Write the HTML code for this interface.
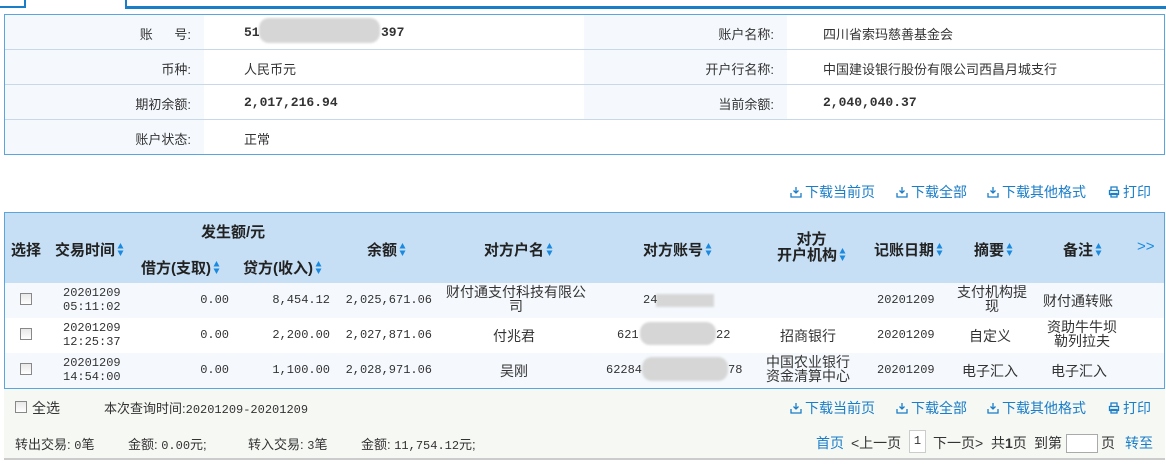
<!DOCTYPE html>
<html><head><meta charset="utf-8">
<style>
*{margin:0;padding:0;box-sizing:border-box}
body{width:1166px;height:464px;background:#fff;font-family:"Liberation Sans","Noto Sans CJK SC",sans-serif;font-size:13px;color:#333;position:relative;overflow:hidden}
.a{position:absolute;white-space:nowrap}
.mono{font-family:"Liberation Mono","Noto Sans CJK SC",monospace;font-size:12px}
.bm{font-family:"Liberation Mono",monospace;font-size:13px;font-weight:bold}
.blue{color:#1a7dc8}
.lnk{position:absolute;color:#1a7dc8;font-size:14px;white-space:nowrap}
.lnk svg{vertical-align:-1px;margin-right:3px}
.hd{position:absolute;font-weight:bold;font-size:15px;color:#222;white-space:nowrap;text-align:center}
.sort{display:inline-block;width:7px;height:15px;vertical-align:-2px;margin-left:2px}
.cb{position:absolute;width:12px;height:12px;border:1px solid #888;background:linear-gradient(#e8e8e8,#fff)}
.blur{position:absolute;background:#d6d6d6;border-radius:10px;filter:blur(1px)}
</style></head><body>
<div class="a" style="left:0;top:6px;width:26px;height:2px;background:#1a7dc8"></div>
<div class="a" style="left:24px;top:0;width:2px;height:8px;background:#1a7dc8"></div>
<div class="a" style="left:125px;top:0;width:2px;height:8px;background:#1a7dc8"></div>
<div class="a" style="left:125px;top:6px;width:1041px;height:3px;background:#1a7dc8"></div>

<div class="a" style="left:4px;top:14px;width:1161px;height:141px;border:1px solid #5aa5e0"></div>
<div class="a" style="left:5px;top:15px;width:199px;height:139px;background:#f5f9fd"></div>
<div class="a" style="left:584px;top:15px;width:203px;height:104px;background:#f5f9fd"></div>
<div class="a" style="left:5px;top:49px;width:1159px;height:1px;background:#c8d8e8"></div>
<div class="a" style="left:5px;top:84px;width:1159px;height:1px;background:#c8d8e8"></div>
<div class="a" style="left:5px;top:119px;width:1159px;height:1px;background:#c8d8e8"></div>

<div class="a" style="right:975px;top:24px">账&nbsp;&nbsp;&nbsp;&nbsp;&nbsp;&nbsp;号:</div>
<div class="a" style="right:975px;top:59px">币种:</div>
<div class="a" style="right:975px;top:94px">期初余额:</div>
<div class="a" style="right:975px;top:129px">账户状态:</div>
<div class="blur" style="left:259px;top:18px;width:121px;height:25px"></div>
<div class="a bm" style="left:244px;top:25px">51</div>
<div class="a bm" style="left:381px;top:25px">397</div>
<div class="a" style="left:244px;top:59px">人民币元</div>
<div class="a bm" style="left:244px;top:95px">2,017,216.94</div>
<div class="a" style="left:244px;top:129px">正常</div>

<div class="a" style="right:392px;top:24px">账户名称:</div>
<div class="a" style="right:392px;top:59px">开户行名称:</div>
<div class="a" style="right:392px;top:94px">当前余额:</div>
<div class="a" style="left:823px;top:24px">四川省索玛慈善基金会</div>
<div class="a" style="left:823px;top:59px">中国建设银行股份有限公司西昌月城支行</div>
<div class="a bm" style="left:823px;top:95px">2,040,040.37</div>

<svg width="0" height="0" style="position:absolute"><defs>
<symbol id="dl" viewBox="0 0 12 12"><path d="M6 1v6M3.5 4.5L6 7l2.5-2.5M1 7v4h10V7" fill="none" stroke="#1a7dc8" stroke-width="1.3"/></symbol>
<symbol id="pr" viewBox="0 0 12 12"><path d="M3 4V1h6v3M1.5 4.5h9v4h-9zM3 7.5h6V11H3z" fill="none" stroke="#1a7dc8" stroke-width="1.3"/></symbol>
<symbol id="s" viewBox="0 0 7 15"><path d="M3.5 1L6.5 6.5H0.5zM3.5 14L6.5 8.5H0.5z" fill="#1a8ae0"/></symbol>
</defs></svg>
<div class="lnk" style="left:790px;top:182px"><svg width="12" height="12"><use href="#dl"/></svg>下载当前页</div>
<div class="lnk" style="left:896px;top:182px"><svg width="12" height="12"><use href="#dl"/></svg>下载全部</div>
<div class="lnk" style="left:987px;top:182px"><svg width="12" height="12"><use href="#dl"/></svg>下载其他格式</div>
<div class="lnk" style="left:1108px;top:182px"><svg width="12" height="12"><use href="#pr"/></svg>打印</div>

<div class="a" style="left:4px;top:212px;width:1161px;height:177px;border:1px solid #5aa5e0;background:#fff"></div>
<div class="a" style="left:5px;top:213px;width:1159px;height:70px;background:#c6dff5"></div>
<div class="a" style="left:5px;top:283px;width:1159px;height:35px;background:#f5f9fd"></div>
<div class="a" style="left:5px;top:353px;width:1159px;height:35px;background:#f5f9fd"></div>

<div class="hd" style="left:11px;top:239px">选择</div>
<div class="hd" style="left:55px;top:239px">交易时间<svg class="sort"><use href="#s"/></svg></div>
<div class="hd" style="left:201px;top:221px">发生额/元</div>
<div class="hd" style="left:141px;top:257px">借方(支取)<svg class="sort"><use href="#s"/></svg></div>
<div class="hd" style="left:243px;top:257px">贷方(收入)<svg class="sort"><use href="#s"/></svg></div>
<div class="hd" style="left:367px;top:239px">余额<svg class="sort"><use href="#s"/></svg></div>
<div class="hd" style="left:484px;top:239px">对方户名<svg class="sort"><use href="#s"/></svg></div>
<div class="hd" style="left:643px;top:239px">对方账号<svg class="sort"><use href="#s"/></svg></div>
<div class="hd" style="left:777px;top:232px;line-height:15px">对方<br>开户机构<svg class="sort"><use href="#s"/></svg></div>
<div class="hd" style="left:874px;top:239px">记账日期<svg class="sort"><use href="#s"/></svg></div>
<div class="hd" style="left:974px;top:239px">摘要<svg class="sort"><use href="#s"/></svg></div>
<div class="hd" style="left:1063px;top:239px">备注<svg class="sort"><use href="#s"/></svg></div>
<div class="hd" style="left:1137px;top:238px;color:#1a8ae0;font-weight:normal">&gt;&gt;</div>

<div class="cb" style="left:20px;top:293px"></div>
<div class="cb" style="left:20px;top:328px"></div>
<div class="cb" style="left:20px;top:363px"></div>

<div class="a mono" style="left:63px;top:286px;line-height:14px">20201209<br>05:11:02</div>
<div class="a mono" style="left:63px;top:321px;line-height:14px">20201209<br>12:25:37</div>
<div class="a mono" style="left:63px;top:356px;line-height:14px">20201209<br>14:54:00</div>
<div class="a mono" style="right:937px;top:293px">0.00</div>
<div class="a mono" style="right:937px;top:328px">0.00</div>
<div class="a mono" style="right:937px;top:363px">0.00</div>
<div class="a mono" style="right:836px;top:293px">8,454.12</div>
<div class="a mono" style="right:836px;top:328px">2,200.00</div>
<div class="a mono" style="right:836px;top:363px">1,100.00</div>
<div class="a mono" style="right:734px;top:293px">2,025,671.06</div>
<div class="a mono" style="right:734px;top:328px">2,027,871.06</div>
<div class="a mono" style="right:734px;top:363px">2,028,971.06</div>
<div class="a" style="left:446px;top:285px;line-height:14px;text-align:center;font-size:14px">财付通支付科技有限公<br>司</div>
<div class="a" style="left:493px;top:326px;font-size:14px">付兆君</div>
<div class="a" style="left:500px;top:361px;font-size:14px">吴刚</div>

<div class="blur" style="left:656px;top:294px;width:58px;height:13px;border-radius:0"></div>
<div class="a mono" style="left:643px;top:293px">24</div>
<div class="blur" style="left:640px;top:322px;width:76px;height:23px"></div>
<div class="a mono" style="left:617px;top:328px">621</div>
<div class="a mono" style="left:716px;top:328px">22</div>
<div class="blur" style="left:642px;top:357px;width:86px;height:24px"></div>
<div class="a mono" style="left:606px;top:363px">62284</div>
<div class="a mono" style="left:728px;top:363px">78</div>

<div class="a" style="left:780px;top:326px;font-size:14px">招商银行</div>
<div class="a" style="left:766px;top:355px;line-height:14px;text-align:center;font-size:14px">中国农业银行<br>资金清算中心</div>
<div class="a mono" style="left:877px;top:293px">20201209</div>
<div class="a mono" style="left:877px;top:328px">20201209</div>
<div class="a mono" style="left:877px;top:363px">20201209</div>
<div class="a" style="left:957px;top:285px;line-height:14px;text-align:center;font-size:14px">支付机构提<br>现</div>
<div class="a" style="left:969px;top:326px;font-size:14px">自定义</div>
<div class="a" style="left:962px;top:361px;font-size:14px">电子汇入</div>
<div class="a" style="left:1043px;top:291px;font-size:14px">财付通转账</div>
<div class="a" style="left:1047px;top:320px;line-height:14px;text-align:center;font-size:14px">资助牛牛坝<br>勒列拉夫</div>
<div class="a" style="left:1051px;top:361px;font-size:14px">电子汇入</div>

<div class="a" style="left:4px;top:389px;width:1161px;height:71px;background:#f6f8f4;border-bottom:2px solid #ccc"></div>
<div class="cb" style="left:15px;top:401px"></div>
<div class="a" style="left:32px;top:398px;font-size:14px">全选</div>
<div class="a" style="left:104px;top:398px">本次查询时间:<span class="mono">20201209-20201209</span></div>
<div class="lnk" style="left:790px;top:398px"><svg width="12" height="12"><use href="#dl"/></svg>下载当前页</div>
<div class="lnk" style="left:896px;top:398px"><svg width="12" height="12"><use href="#dl"/></svg>下载全部</div>
<div class="lnk" style="left:987px;top:398px"><svg width="12" height="12"><use href="#dl"/></svg>下载其他格式</div>
<div class="lnk" style="left:1108px;top:398px"><svg width="12" height="12"><use href="#pr"/></svg>打印</div>

<div class="a" style="left:15px;top:434px">转出交易: <span class="mono">0</span>笔</div>
<div class="a" style="left:128px;top:434px">金额: <span class="mono">0.00</span>元;</div>
<div class="a" style="left:248px;top:434px">转入交易: <span class="mono">3</span>笔</div>
<div class="a" style="left:361px;top:434px">金额: <span class="mono">11,754.12</span>元;</div>

<div class="a blue" style="left:816px;top:433px;font-size:14px">首页</div>
<div class="a" style="left:851px;top:433px;font-size:14px">&lt;上一页</div>
<div class="a mono" style="left:909px;top:430px;width:17px;height:23px;border:1px solid #ccc;background:#fff;text-align:center;line-height:21px">1</div>
<div class="a" style="left:933px;top:433px;font-size:14px">下一页&gt;</div>
<div class="a" style="left:991px;top:433px;font-size:14px">共<b>1</b>页</div>
<div class="a" style="left:1034px;top:433px;font-size:14px">到第</div>
<div class="a" style="left:1066px;top:434px;width:32px;height:19px;border:1px solid #aaa;background:#fff"></div>
<div class="a" style="left:1101px;top:433px;font-size:14px">页</div>
<div class="a blue" style="left:1125px;top:433px;font-size:14px">转至</div>
</body></html>
